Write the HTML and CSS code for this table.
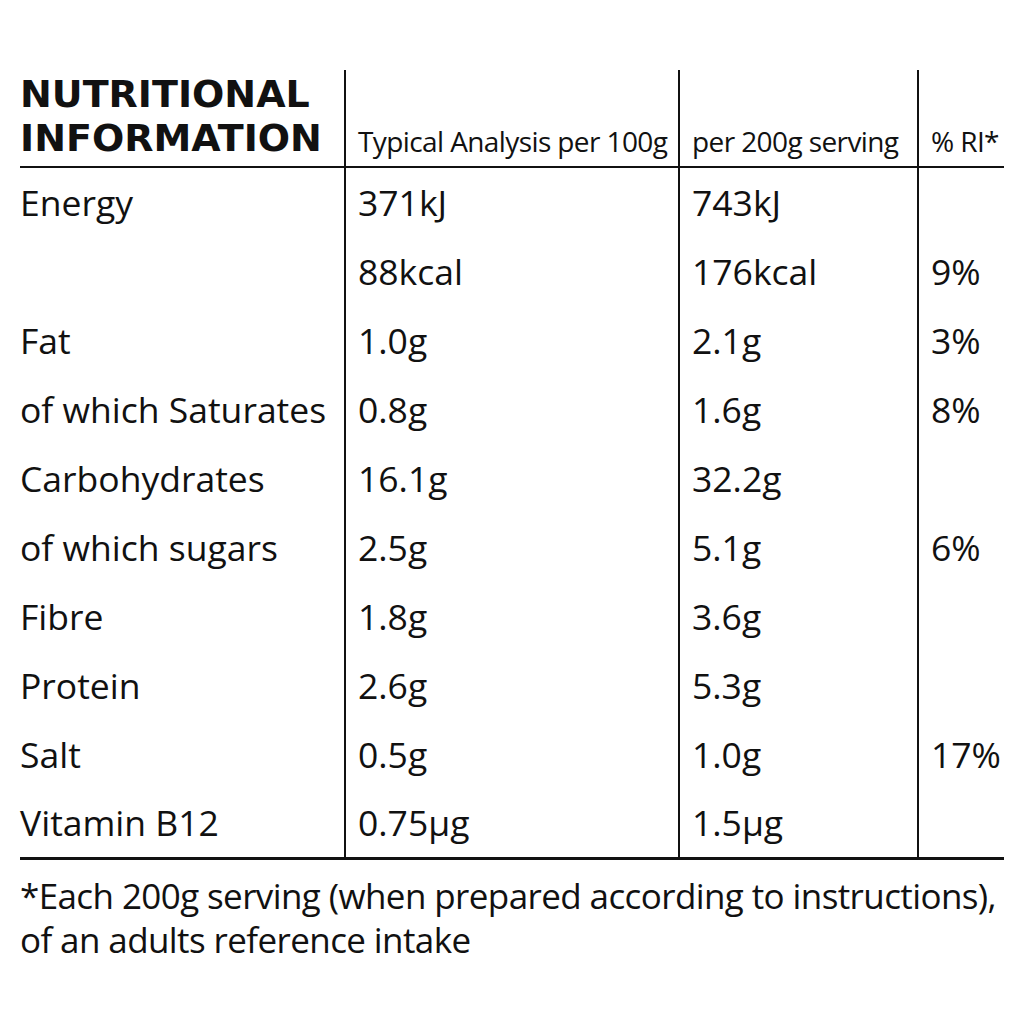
FILE: index.html
```html
<!DOCTYPE html>
<html>
<head>
<meta charset="utf-8">
<link rel="stylesheet" href="styles.css">
</head>
<body>
<div class="panel">
  <div class="table">
    <div class="cell head title"><span>NUTRITIONAL<br>INFORMATION</span></div>
    <div class="cell head sep"><span>Typical Analysis per 100g</span></div>
    <div class="cell head sep"><span>per 200g serving</span></div>
    <div class="cell head sep"><span>% RI*</span></div>

    <div class="cell">Energy</div><div class="cell sep">371kJ</div><div class="cell sep">743kJ</div><div class="cell sep"></div>
    <div class="cell"></div><div class="cell sep">88kcal</div><div class="cell sep">176kcal</div><div class="cell sep">9%</div>
    <div class="cell">Fat</div><div class="cell sep">1.0g</div><div class="cell sep">2.1g</div><div class="cell sep">3%</div>
    <div class="cell">of which Saturates</div><div class="cell sep">0.8g</div><div class="cell sep">1.6g</div><div class="cell sep">8%</div>
    <div class="cell">Carbohydrates</div><div class="cell sep">16.1g</div><div class="cell sep">32.2g</div><div class="cell sep"></div>
    <div class="cell">of which sugars</div><div class="cell sep">2.5g</div><div class="cell sep">5.1g</div><div class="cell sep">6%</div>
    <div class="cell">Fibre</div><div class="cell sep">1.8g</div><div class="cell sep">3.6g</div><div class="cell sep"></div>
    <div class="cell">Protein</div><div class="cell sep">2.6g</div><div class="cell sep">5.3g</div><div class="cell sep"></div>
    <div class="cell">Salt</div><div class="cell sep">0.5g</div><div class="cell sep">1.0g</div><div class="cell sep">17%</div>
    <div class="cell">Vitamin B12</div><div class="cell sep">0.75µg</div><div class="cell sep">1.5µg</div><div class="cell sep"></div>
  </div>
  <p class="note">*Each 200g serving (when prepared according to instructions),<br>of an adults reference intake</p>
</div>
</body>
</html>
```
FILE: styles.css
```css
html, body {
  margin: 0;
  padding: 0;
  background: #ffffff;
}
body {
  width: 1024px;
  height: 1024px;
  overflow: hidden;
  color: #111111;
  font-family: "Open Sans", "Liberation Sans", sans-serif;
}
.panel {
  padding: 70px 20px 0 20px;
}
.table {
  display: grid;
  grid-template-columns: 324px 334px 239px 87px;
  grid-template-rows: 98px repeat(10, 68.9px);
  border-bottom: 3px solid #111;
}
.cell {
  display: flex;
  align-items: center;
  font-size: 35.5px;
  white-space: nowrap;
}
.sep {
  border-left: 2px solid #111;
  padding-left: 12px;
}
.head {
  align-items: flex-end;
  padding-bottom: 7px;
  border-bottom: 2.5px solid #111;
  font-size: 28px;
  line-height: 36px;
  letter-spacing: -0.6px;
}
.title {
  font-family: "DejaVu Sans", sans-serif;
  font-weight: 800;
  font-size: 38px;
  line-height: 44px;
  letter-spacing: 0;
  padding-bottom: 6px;
}
.note {
  margin: 14px 0 0 0;
  font-size: 35px;
  line-height: 44px;
  letter-spacing: -0.6px;
  white-space: nowrap;
}
```
